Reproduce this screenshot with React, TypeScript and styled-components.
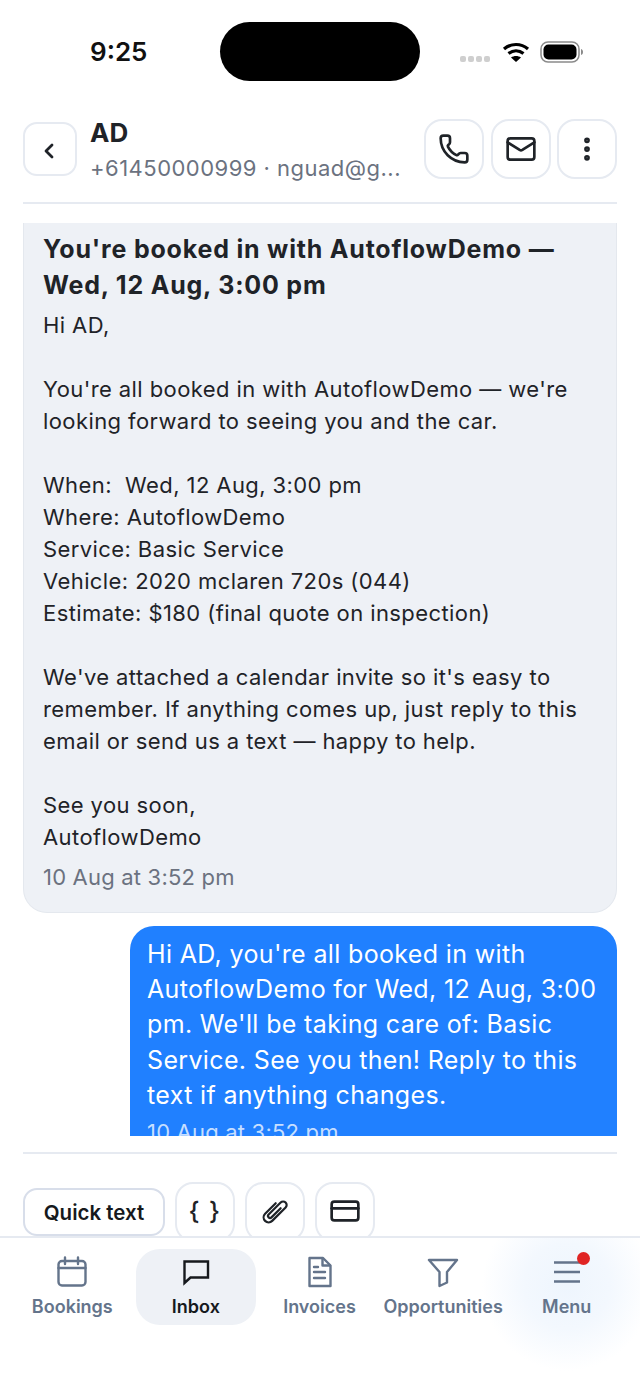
import React from "react";
import styled, { createGlobalStyle } from "styled-components";
import { ChevronLeft, Phone, Mail, EllipsisVertical, CreditCard } from "lucide-react";

const Global = createGlobalStyle`
  html, body { margin: 0; padding: 0; background: #fff; }
  * { box-sizing: border-box; }
`;

const Page = styled.div`
  position: relative;
  width: 640px;
  height: 1391px;
  overflow: hidden;
  background: #fff;
  font-family: Inter, "Liberation Sans", sans-serif;
  color: #1f2328;
  display: flex;
  flex-direction: column;
`;

const StatusBar = styled.div`
  height: 119px;
  flex: none;
  padding: 22px 56px 0 90px;
  display: flex;
  align-items: flex-start;
`;
const Clock = styled.div`
  width: 130px;
  font-size: 26px;
  font-weight: 600;
  line-height: 60px;
  color: #111;
`;
const Island = styled.div`
  width: 200px;
  height: 59px;
  border-radius: 30px;
  background: #000;
`;
const StatusIcons = styled.div`
  margin-left: auto;
  display: flex;
  align-items: center;
  height: 59px;
  gap: 10px;
`;
const SignalDots = styled.div`
  display: flex;
  gap: 2px;
  margin-top: 15px;
  margin-right: 2px;
  & > i { width: 6px; height: 6px; border-radius: 2px; background: #cfcfcf; display: block; }
`;

const Header = styled.header`
  flex: none;
  margin: 0 23px;
  height: 85px;
  border-bottom: 2px solid #e6eaf1;
  display: flex;
  align-items: flex-start;
`;
const BackButton = styled.div`
  width: 54px;
  height: 54px;
  margin-top: 3px;
  padding: 3px 2px 0 0;
  border: 2px solid #e6eaf1;
  border-radius: 14px;
  display: flex;
  align-items: center;
  justify-content: center;
  color: #1f2328;
`;
const Contact = styled.div`
  margin-left: 13px;
  width: 320px;
  margin-top: -3px;
`;
const ContactName = styled.div`
  font-size: 26px;
  font-weight: 700;
  line-height: 34px;
`;
const ContactMeta = styled.div`
  font-size: 22px;
  letter-spacing: 0.48px;
  line-height: 36px;
  color: #6b7280;
  white-space: nowrap;
`;
const Actions = styled.div`
  margin-left: auto;
  display: flex;
  gap: 6.5px;
`;
const IconButton = styled.div`
  width: 60px;
  height: 60px;
  flex: none;
  border: 2px solid #e6eaf1;
  border-radius: 18px;
  background: #fff;
  display: flex;
  align-items: center;
  justify-content: center;
  color: #1f2328;
`;

const Thread = styled.div`
  flex: none;
  height: 913px;
  margin: 19px 23px 0;
  overflow: hidden;
  display: flex;
  flex-direction: column;
  gap: 13px;
`;
const EmailCard = styled.div`
  flex: none;
  background: #eef1f6;
  border: 1px solid #e4e8ee;
  border-top: none;
  border-radius: 0 0 24px 24px;
  padding: 8px 19px 19px 19px;
`;
const EmailTitle = styled.div`
  font-size: 25px;
  font-weight: 700;
  letter-spacing: 0.8px;
  line-height: 36px;
  margin-bottom: 6px;
  white-space: pre-line;
`;
const EmailBody = styled.div`
  font-size: 22px;
  letter-spacing: 0.41px;
  line-height: 32px;
  white-space: pre-wrap;
`;
const Timestamp = styled.div`
  font-size: 22px;
  letter-spacing: 0.2px;
  line-height: 32px;
  margin-top: 8px;
  color: #6b7280;
`;
const TextBubble = styled.div`
  flex: none;
  align-self: flex-end;
  width: 487px;
  background: #2080ff;
  color: #fff;
  border-radius: 24px;
  padding: 11px 17px 18px;
  font-size: 25px;
  letter-spacing: 0.35px;
  line-height: 35.2px;
`;
const BubbleTime = styled.div`
  font-size: 22px;
  letter-spacing: 0.2px;
  line-height: 32px;
  margin-top: 3px;
  color: rgba(255, 255, 255, 0.75);
`;

const Composer = styled.div`
  flex: none;
  margin: 16px 23px 0;
  padding-top: 28px;
  height: 84px;
  border-top: 2px solid #e6eaf1;
  display: flex;
  align-items: flex-start;
  gap: 10px;
  overflow: hidden;
`;
const QuickText = styled.div`
  width: 142px;
  height: 48px;
  margin-top: 6px;
  border: 2px solid #d8deea;
  border-radius: 14px;
  display: flex;
  align-items: center;
  justify-content: center;
  font-size: 20.5px;
  font-weight: 600;
  color: #16191d;
`;
const Braces = styled.span`
  font-size: 25px;
  font-weight: 500;
  letter-spacing: 1.5px;
  line-height: 30px;
`;
const ComposerIcon = styled(IconButton)`
  padding-bottom: 2px;
`;

const Nav = styled.nav`
  flex: none;
  position: relative;
  height: 154px;
  border-top: 2px solid #e6eaf1;
  padding: 11px 11px 0;
  display: grid;
  grid-template-columns: repeat(5, 1fr);
  align-items: start;
  background: radial-gradient(circle 85px at 567px 48px, #eef5fd 0%, #f3f8fe 50%, #ffffff 100%);
`;
const NavItem = styled.div<{ $active?: boolean }>`
  position: relative;
  height: 76px;
  margin: 0 2px 0 1px;
  border-radius: 24px;
  background: ${(p) => (p.$active ? "#eef1f6" : "transparent")};
  color: ${(p) => (p.$active ? "#16191d" : "#64748b")};
  display: flex;
  flex-direction: column;
  align-items: center;
  padding-top: 7px;
`;
const NavIconBox = styled.div`
  position: relative;
  height: 32px;
  display: flex;
  align-items: center;
  justify-content: center;
`;
const NavLabel = styled.div`
  margin-top: 8px;
  font-size: 18px;
  font-weight: 600;
  line-height: 22px;
  white-space: nowrap;
`;
const Badge = styled.span`
  position: absolute;
  top: -4px;
  right: -7px;
  width: 13px;
  height: 13px;
  border-radius: 50%;
  background: #e02424;
`;

const sw = { fill: "none", stroke: "currentColor", strokeWidth: 2.4, strokeLinecap: "round", strokeLinejoin: "round" } as const;

const Calendar = () => (
  <svg width="32" height="32" viewBox="0 0 32 32" {...sw}>
    <rect x="2.500" y="5" width="27" height="24.500" rx="3.500" />
    <path d="M2.500 12h27M9 1.500v6.500M22 1.500v6.500" />
  </svg>
);
const Bubble = () => (
  <svg width="32" height="32" viewBox="0 0 32 32" {...sw} strokeLinejoin="miter">
    <path d="M4.500 27V5.500H28V21.500H10.500z" />
  </svg>
);
const Doc = () => (
  <svg width="32" height="32" viewBox="0 0 32 32" {...sw}>
    <path d="M6.500 2H20l7.500 7.500V30H6.500z" />
    <path d="M19.500 2.500v7h7.500M11 11h4M11 16h11M11 22h11" />
  </svg>
);
const Funnel = () => (
  <svg width="32" height="32" viewBox="0 0 32 32" {...sw}>
    <path d="M2 4h28L20 16v10.500L12.500 30V16z" />
  </svg>
);
const Bars = () => (
  <svg width="32" height="32" viewBox="0 0 32 32" {...sw} strokeLinecap="butt">
    <path d="M3 6.500h26M3 16h26M3 25.500h26" />
  </svg>
);
const Wifi = () => (
  <svg width="28" height="22" viewBox="0 0 28 22" fill="none" stroke="#000" strokeWidth="3.200">
    <path d="M2 8c7-6 17-6 24 0M6.500 12.500c4.500-3.500 10.500-3.500 15 0" />
    <path d="M14 21l-5-4.500c3-2 7-2 10 0z" fill="#000" stroke="none" />
  </svg>
);
const Battery = () => (
  <svg width="44" height="22" viewBox="0 0 44 22">
    <rect x="1" y="1" width="38" height="20" rx="7" fill="none" stroke="#8a8a8a" strokeWidth="1.500" />
    <rect x="3.500" y="3.500" width="33" height="15" rx="5" fill="#000" />
    <path d="M41 8c1.500.5 2 1.500 2 3s-.5 2.500-2 3z" fill="#8a8a8a" />
  </svg>
);
const Clip = () => (
  <svg width="32" height="32" viewBox="0 0 32 32" fill="none" stroke="currentColor" strokeWidth="2.200" strokeLinecap="round" strokeLinejoin="round">
    <path transform="rotate(45 16 16)" d="M11 10V25a5 5 0 0 0 10 0V6a3.500 3.500 0 0 0-7 0V23a2 2 0 0 0 4 0V10" />
  </svg>
);

const emailTitle = `You're booked in with AutoflowDemo —
Wed, 12 Aug, 3:00 pm`;

const emailBody = `Hi AD,

You're all booked in with AutoflowDemo — we're
looking forward to seeing you and the car.

When:  Wed, 12 Aug, 3:00 pm
Where: AutoflowDemo
Service: Basic Service
Vehicle: 2020 mclaren 720s (044)
Estimate: $180 (final quote on inspection)

We've attached a calendar invite so it's easy to
remember. If anything comes up, just reply to this
email or send us a text — happy to help.

See you soon,
AutoflowDemo`;

export default function App() {
  return (
    <Page>
      <Global />
      <StatusBar>
        <Clock>9:25</Clock>
        <Island />
        <StatusIcons>
          <SignalDots><i /><i /><i /><i /></SignalDots>
          <Wifi />
          <Battery />
        </StatusIcons>
      </StatusBar>
      <Header>
        <BackButton><ChevronLeft size={24} strokeWidth={2.800} /></BackButton>
        <Contact>
          <ContactName>AD</ContactName>
          <ContactMeta>+61450000999 · nguad@g...</ContactMeta>
        </Contact>
        <Actions>
          <IconButton><Phone size={32} strokeWidth={2} /></IconButton>
          <IconButton><Mail size={32} strokeWidth={2} /></IconButton>
          <IconButton><EllipsisVertical size={30} strokeWidth={2.600} /></IconButton>
        </Actions>
      </Header>
      <Thread>
        <EmailCard>
          <EmailTitle>{emailTitle}</EmailTitle>
          <EmailBody>{emailBody}</EmailBody>
          <Timestamp>10 Aug at 3:52 pm</Timestamp>
        </EmailCard>
        <TextBubble>
          Hi AD, you're all booked in with AutoflowDemo for Wed, 12 Aug, 3:00 pm. We'll be taking care of: Basic Service. See you then! Reply to this text if anything changes.
          <BubbleTime>10 Aug at 3:52 pm</BubbleTime>
        </TextBubble>
      </Thread>
      <Composer>
        <QuickText>Quick text</QuickText>
        <ComposerIcon><Braces>{"{ }"}</Braces></ComposerIcon>
        <ComposerIcon><Clip /></ComposerIcon>
        <ComposerIcon><CreditCard size={32} strokeWidth={2} /></ComposerIcon>
      </Composer>
      <Nav>
        <NavItem><NavIconBox><Calendar /></NavIconBox><NavLabel>Bookings</NavLabel></NavItem>
        <NavItem $active><NavIconBox><Bubble /></NavIconBox><NavLabel>Inbox</NavLabel></NavItem>
        <NavItem><NavIconBox><Doc /></NavIconBox><NavLabel>Invoices</NavLabel></NavItem>
        <NavItem><NavIconBox><Funnel /></NavIconBox><NavLabel>Opportunities</NavLabel></NavItem>
        <NavItem><NavIconBox><Bars /><Badge /></NavIconBox><NavLabel>Menu</NavLabel></NavItem>
      </Nav>
    </Page>
  );
}
